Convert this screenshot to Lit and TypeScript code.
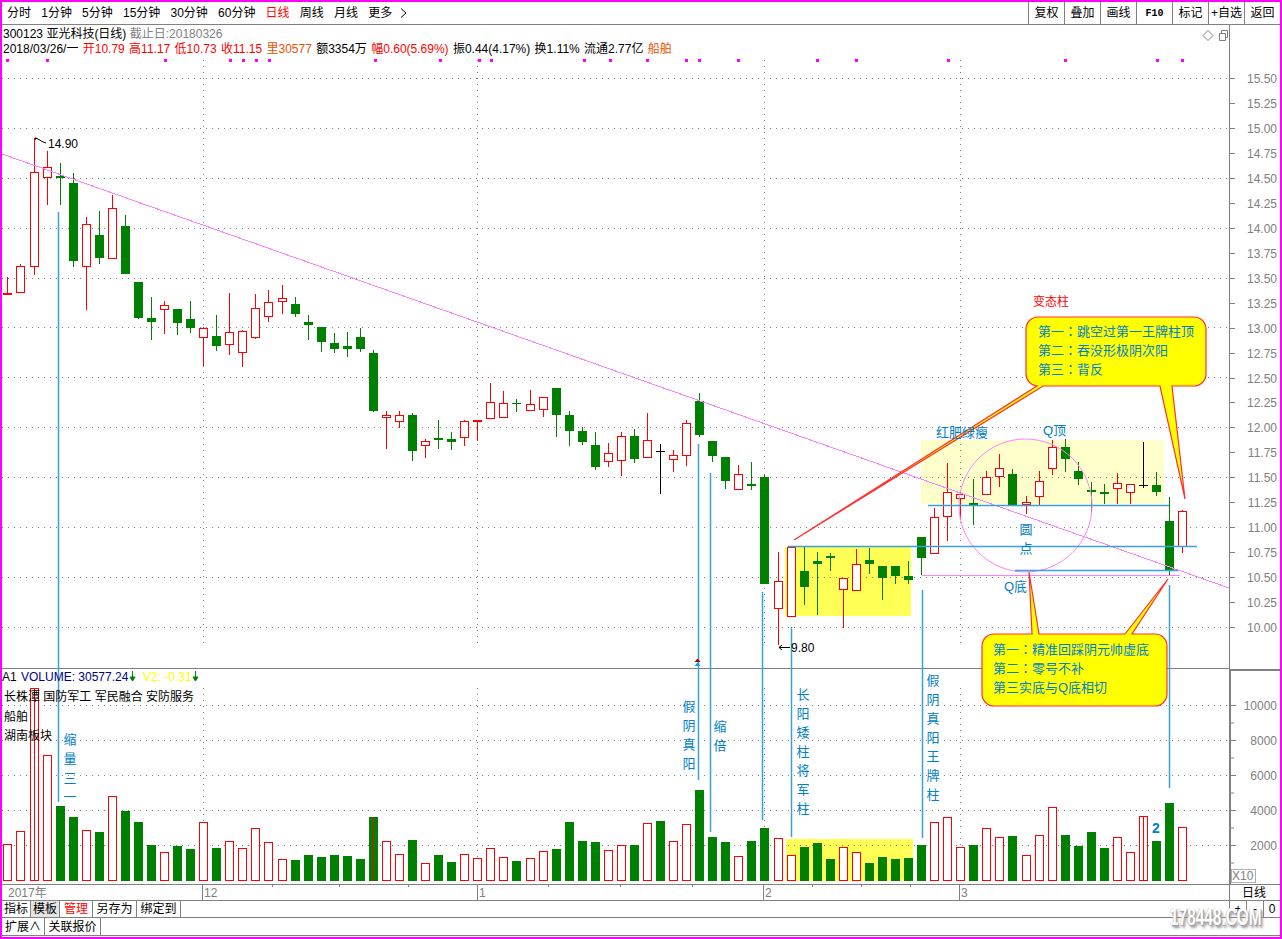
import { LitElement, html, css, svg } from "lit";
import { customElement } from "lit/decorators.js";

// type, wick top, body top, body bottom, wick bottom (pixel rows of the picture)
const CANDLES: [string, number, number, number, number][] = [
  ["r",277,293,295,295],["r",264,266,293,293],["r",138,172,267,275],["r",151,167,178,205],["g",163,176,178,205],
  ["g",173,183,261,267],["r",217,224,267,310],["g",211,235,258,264],["r",195,208,259,259],["g",215,226,274,274],
  ["g",282,282,318,319],["g",297,318,322,340],["r",301,305,310,334],["g",309,309,323,335],["g",301,319,328,333],
  ["r",327,328,338,366],["g",315,336,346,351],["r",293,332,345,355],["r",330,331,353,367],["r",294,308,338,339],
  ["r",290,302,317,322],["r",285,298,302,314],["g",297,304,314,317],["g",315,322,325,340],["g",327,327,342,352],
  ["g",333,343,349,353],["g",332,346,349,357],["g",328,337,349,352],["g",350,353,411,412],["r",411,415,418,449],
  ["r",411,415,422,428],["g",413,415,451,461],["r",439,441,446,458],["g",420,438,440,449],["g",432,439,442,450],
  ["r",420,421,438,446],["r",420,420,422,441],["r",383,402,419,419],["r",391,403,418,418],["g",399,403,404,412],
  ["r",390,404,411,411],["r",397,397,410,417],["g",388,388,415,437],["g",411,415,431,446],["g",427,431,442,445],
  ["g",432,445,467,470],["r",443,453,462,467],["r",432,436,461,476],["g",429,436,459,463],["r",413,440,458,458],
  ["k",444,451,451,494],["r",450,455,460,472],["r",420,423,456,466],["g",393,401,435,437],["g",441,441,456,462],
  ["g",457,457,481,489],["r",465,474,490,490],["g",462,484,486,490],["g",475,477,584,584],["r",552,581,609,645],
  ["r",547,547,617,617],["g",547,571,587,605],["g",552,561,564,615],["g",553,556,558,571],["r",578,578,590,628],
  ["r",549,564,591,591],["g",548,560,564,574],["g",566,566,578,600],["g",566,566,576,584],["g",561,576,580,584],
  ["g",537,537,558,575],["r",508,517,554,554],["r",463,492,517,541],["r",491,494,499,519],["g",479,503,505,525],
  ["r",471,477,495,495],["r",454,468,477,487],["g",469,474,505,505],["r",496,502,505,514],["r",471,481,497,505],
  ["r",440,447,469,475],["g",439,447,459,472],["g",462,471,479,485],["g",482,490,492,512],["g",484,492,494,504],
  ["r",473,483,489,504],["r",484,484,493,504],["k",442,485,485,488],["g",472,485,492,496],["g",497,521,570,575],
  ["r",510,511,547,553],
];

// volume bar: type and top row, in units of the 3x crop rows (row = v/3 + 665)
const VOLS: [string, number][] = [
  ["r",538],["r",499],["r",70],["r",271],["g",423],["g",456],["r",496],["g",501],["r",394],["g",438],
  ["g",471],["g",540],["r",562],["g",543],["g",552],["r",472],["g",549],["r",529],["r",550],["r",490],
  ["r",532],["r",583],["g",585],["g",570],["g",576],["g",570],["g",573],["g",582],["g",456],["r",529],
  ["r",568],["g",525],["r",595],["g",570],["g",591],["r",568],["r",580],["r",550],["r",577],["g",588],
  ["r",580],["r",559],["g",552],["g",471],["g",528],["g",531],["r",556],["r",541],["g",540],["r",475],
  ["g",468],["r",529],["r",478],["g",375],["g",516],["g",531],["r",574],["g",528],["g",489],["r",520],
  ["r",571],["g",546],["g",534],["g",582],["r",546],["r",562],["g",594],["g",576],["g",582],["g",579],
  ["g",540],["r",472],["r",457],["r",547],["g",540],["r",490],["r",517],["g",513],["r",571],["r",511],
  ["r",427],["g",510],["g",543],["g",501],["g",549],["r",517],["r",562],["r",454],["g",528],["g",414],
  ["r",487],
];

const colX = (i: number) => {
  let jumps = 0;
  for (const j of [2, 21, 40, 59, 78]) if (i >= j) jumps++;
  return 7 + 13 * i + jumps;
};

const VOL_BASE = 881;
const PRICE_Y = (p: number) => Math.round(627 - (p - 10) * 99.8);
const PRICE_LABELS: string[] = [];
for (let p = 10; p <= 15.5; p += 0.25) PRICE_LABELS.push(p.toFixed(2));
const DOT_XS = [7, 47, 165, 230, 243, 256, 269, 375, 440, 479, 491, 584, 610, 647, 686, 699, 738, 817, 856, 948, 1065, 1157, 1182];

const BLUE_V: [number, number, number][] = [
  [58, 212, 802], [698, 444, 780], [710, 473, 832], [762, 592, 820],
  [791, 627, 837], [922, 590, 838], [1169, 585, 788],
];
const BLUE_H: [number, number, number][] = [
  [546, 788, 1197], [505, 928, 1169], [570, 1015, 1178],
];

const VTEXT: [number, string, number[]][] = [
  [70, "缩量三一", [739, 758, 778, 796]],
  [689, "假阴真阳", [706, 725, 744, 763]],
  [720, "缩倍", [726, 745]],
  [803, "长阳矮柱将军柱", [694, 713, 732, 751, 770, 789, 808]],
  [933, "假阴真阳王牌柱", [680, 699, 718, 737, 756, 775, 794]],
  [1026, "圆点", [529, 548]],
];

const CALLOUT_LINES: [number, number, string, string][] = [
  [1038, 336, "第一", "跳空过第一王牌柱顶"],
  [1038, 355, "第二", "吞没形极阴次阳"],
  [1038, 374, "第三", "背反"],
  [993, 654, "第一", "精准回踩阴元帅虚底"],
  [993, 673, "第二", "零号不补"],
];

@customElement("app-root")
export class AppRoot extends LitElement {
  static styles = css`
    :host {
      display: block;
      width: 1282px;
      height: 939px;
      box-sizing: border-box;
      border: 2px solid #ff00ff;
      background: #fff;
      color: #000;
      font: 12px/15px "Liberation Sans", "Noto Sans CJK SC", sans-serif;
      overflow: hidden;
    }
    .page { display: flex; flex-direction: column; height: 100%; }
    .toolbar {
      flex: none; height: 22px; display: flex; align-items: center;
      border-bottom: 1px solid #808080; padding-left: 5px;
    }
    .periods { display: flex; gap: 10.2px; padding-top: 1px; }
    .periods .on { color: #f00; }
    .chev { display: block; margin-left: -1px; }
    .actions { margin-left: auto; display: flex; height: 100%; }
    .actions span {
      width: 36px; box-sizing: border-box; border-left: 1px solid #808080; padding-top: 1px;
      display: flex; align-items: center; justify-content: center;
    }
    .actions .mono { font: bold 10px "Liberation Mono", monospace; }
    .chart { position: relative; flex: none; height: 875px; }
    .chart svg.canvas { display: block; }
    .info { position: absolute; left: 1px; top: 1px; white-space: pre; padding-top: 1px; }
    .info .wide { word-spacing: 1px; }
    .sectors { position: absolute; left: 2px; top: 663px; line-height: 19.5px; }
    .gray { color: #808080; }
    .red { color: #f00; }
    .orange { color: #e85000; }
    svg text { font: 12px "Liberation Sans", "Noto Sans CJK SC", sans-serif; }
    svg text.axis { fill: #808080; }
    svg text.end { text-anchor: end; }
    svg text.note { fill: #0080c8; font-size: 13px; }
    svg text.mid { text-anchor: middle; }
    svg text.bold { font-weight: bold; font-size: 14px; }
    svg text.alert { fill: #f00; }
    svg text.navy { fill: #000080; }
    svg text.yellow { fill: #ffff00; }
    svg tspan.colon { font-family: "Noto Sans CJK TC", sans-serif; }
    .rows { position: relative; flex: none; }
    .row {
      display: flex; border-top: 1px solid #808080; box-sizing: border-box;
    }
    .row.one { height: 17px; }
    .row.two { border-bottom: 1px solid #808080; height: 19px; }
    .tab {
      box-sizing: border-box; padding-top: 1px; display: flex; align-items: center; justify-content: center;
      border-right: 1px solid #808080;
    }
    .tab.w29 { width: 29px; }
    .tab.w33 { width: 33px; }
    .tab.w44 { width: 44px; }
    .tab.w43 { width: 43px; }
    .tab.w56 { width: 56px; }
    .tab.sel { background: #e4e4e4; }
    .tab.red { color: #f00; }
    .spin { margin-left: auto; display: flex; }
    .spin span {
      width: 17px; box-sizing: border-box; border-left: 1px solid #808080;
      display: flex; align-items: center; justify-content: center;
    }
    .watermark {
      position: absolute; left: 1168px; top: 2px; color: #fff;
      font: bold 23px/30px "Liberation Sans", sans-serif;
      transform: scaleX(0.67);
      transform-origin: left center;
      text-shadow: 1px 1px 1px #999, 3px 3px 3px #999, -1px 0 0 #d0d0d0;
    }
  `;

  private chartSvg() {
    const grid = [128, 178, 228, 278, 327, 377, 427, 477, 527, 577, 627, 78].map(
      (y) => svg`<line x1="2" x2="1229" y1=${y + 0.5} y2=${y + 0.5} class="" stroke="#808080" stroke-dasharray="1 5" />`
    );
    const vgrid = [705, 740, 775, 810, 845].map(
      (y) => svg`<line x1="2" x2="1229" y1=${y + 0.5} y2=${y + 0.5} stroke="#808080" stroke-dasharray="1 5" />`
    );
    const vcols = [203, 477, 764, 960].map(
      (x) => svg`
        <line x1=${x + 0.5} x2=${x + 0.5} y1="60" y2="648" stroke="#808080" stroke-dasharray="1 5" />
        <line x1=${x + 0.5} x2=${x + 0.5} y1="688" y2="881" stroke="#808080" stroke-dasharray="1 5" />`
    );
    const candles = CANDLES.map(([t, wt, bt, bb, wb], i) => {
      const x = colX(i);
      const c = t === "r" ? "#ff0000" : t === "g" ? "#008000" : "#000000";
      const flat = bb - bt <= 1;
      if (t === "k") {
        return svg`<g stroke=${c}>
          <line x1=${x + 0.5} x2=${x + 0.5} y1=${wt} y2=${wb} />
          <line x1=${x - 4} x2=${x + 5} y1=${bt + 0.5} y2=${bt + 0.5} /></g>`;
      }
      const fill = t === "r" ? "#fff" : c;
      return svg`<g stroke=${c}>
        <line x1=${x + 0.5} x2=${x + 0.5} y1=${wt} y2=${wb} />
        ${
          flat
            ? svg`<line x1=${x - 4} x2=${x + 5} y1=${bt + 0.5} y2=${bt + 0.5} />`
            : svg`<rect x=${x - 3.5} y=${bt + 0.5} width="8" height=${bb - bt - 1} fill=${fill} />`
        }</g>`;
    });
    const vols = VOLS.map(([t, v], i) => {
      const x = colX(i);
      const top = Math.round(v / 3 + 665);
      if (t === "g") {
        return svg`<rect x=${x - 4} y=${top} width="9" height=${VOL_BASE - top} fill="#008000" />
          ${i === 28 ? svg`<line x1=${x + 0.5} x2=${x + 0.5} y1=${top} y2=${VOL_BASE} stroke="#f00" />` : ""}`;
      }
      return svg`<rect x=${x - 3.5} y=${top + 0.5} width="8" height=${VOL_BASE - top - 1} fill="#fff" stroke="#f00" />
        ${i === 2 || i === 87 ? svg`<line x1=${x + 0.5} x2=${x + 0.5} y1=${top} y2=${VOL_BASE} stroke="#f00" />` : ""}`;
    });
    const priceAxis = PRICE_LABELS.map((p) => {
      const y = PRICE_Y(Number(p));
      return svg`<line x1="1230" x2="1235" y1=${y + 0.5} y2=${y + 0.5} stroke="#808080" />
        <text class="axis end" x="1277" y=${y + 4.5}>${p}</text>`;
    });
    const volAxis = [[705, "10000"], [740, "8000"], [775, "6000"], [810, "4000"], [845, "2000"]].map(
      ([y, t]) => svg`
        <line x1="1231" x2="1236" y1=${Number(y) + 0.5} y2=${Number(y) + 0.5} stroke="#808080" />
        <line x1="1231" x2="1234" y1=${Number(y) + 18} y2=${Number(y) + 18} stroke="#808080" />
        <text class="axis end" x="1277" y=${Number(y) + 4.5}>${t}</text>`
    );
    const dateTicks = [272, 339, 408, 548, 620, 692, 812, 861, 910].map(
      (x) => svg`<line x1=${x + 0.5} x2=${x + 0.5} y1="884" y2="887" stroke="#808080" />`
    );
    const dateSeps = [[202, "12"], [477, "1"], [763, "2"], [959, "3"]].map(
      ([x, t]) => svg`
        <line x1=${Number(x) + 0.5} x2=${Number(x) + 0.5} y1="884" y2="900" stroke="#808080" />
        <text class="axis" x=${Number(x) + 2} y="897">${t}</text>`
    );
    const notes = VTEXT.flatMap(([x, s, ys]) =>
      [...s].map((ch, i) => svg`<text class="note mid" x=${x} y=${ys[i] + 5}>${ch}</text>`)
    );
    return svg`
      <!-- highlights -->
      <rect x="921" y="440" width="243" height="64" fill="#ffffcc" />
      <rect x="785" y="547" width="126" height="69" fill="#ffff55" />
      <rect x="786" y="839" width="127" height="42" fill="#ffff55" />

      ${grid}${vgrid}${vcols}
      <g shape-rendering="crispEdges">${vols}${candles}</g>
      ${DOT_XS.map((x) => svg`<rect x=${x - 1} y="59" width="3" height="3" fill="#ff00ff" />`)}

      <!-- frames -->
      <line x1="2" x2="1229" y1="668.5" y2="668.5" stroke="#808080" />
      <line x1="1229.5" x2="1229.5" y1="25" y2="669" stroke="#808080" />
      <rect x="1229" y="669" width="52" height="2" fill="#808080" />
      <rect x="1229" y="669" width="2" height="215" fill="#808080" />
      ${priceAxis}${volAxis}
      <rect x="1231.5" y="869.5" width="24" height="13" fill="#fff" stroke="#b0b0b0" />
      <text class="axis" x="1232" y="880">X10</text>
      <line x1="2" x2="1280" y1="884.5" y2="884.5" stroke="#808080" />
      ${dateTicks}${dateSeps}
      <text class="axis" x="8" y="897">2017年</text>
      <text class="mid" x="1254" y="897">日线</text>
      <line x1="1229.5" x2="1229.5" y1="884" y2="900" stroke="#808080" />

      <!-- trend, circle and support lines -->
      <line x1="2" y1="154" x2="1229" y2="588" stroke="#ff80ff" shape-rendering="crispEdges" />
      <circle cx="1025.5" cy="505.5" r="66.5" fill="none" stroke="#ff80ff" />
      <line x1="922" x2="1180" y1="575.5" y2="575.5" stroke="#ff80ff" />
      ${BLUE_V.map(
        ([x, a, b]) => svg`<line x1=${x + 0.5} x2=${x + 0.5} y1=${a} y2=${b} stroke="#3ca0d8" stroke-width="1.5" />`
      )}
      ${BLUE_H.map(
        ([y, a, b]) => svg`<line x1=${a} x2=${b} y1=${y + 0.5} y2=${y + 0.5} stroke="#3ca0d8" stroke-width="1.5" />`
      )}

      <!-- price markers -->
      <g fill="none" stroke="#000">
        <path d="M36 137.5 L35 140 M35 138 L38 139 L42 141.5 L46 143" />
        <path d="M779 647.5 H790 M779 647.5 L782 645 M779 647.5 L782 650" />
      </g>
      <text x="48" y="148">14.90</text>
      <text x="791" y="652">9.80</text>
      <path d="M694.5 662 L697.5 658.5 L700.5 662 Z" fill="#b00000" />
      <path d="M694.5 666 L697.5 662.5 L700.5 666 Z" fill="#00a0ff" />

      <!-- callouts -->
      <path
        d="M1038 317 H1194 a12 12 0 0 1 12 12 V374 a12 12 0 0 1 -12 12 H1172 L1185 499 L1160 386 H1043 L794 540 L1037 386 a12 12 0 0 1 -11 -12 V329 a12 12 0 0 1 12 -12 Z"
        fill="#ffff00" stroke="#ff3030" stroke-width="1.2"
      />
      <path
        d="M994 634 H1032 L1029 572 L1039 634 H1125 L1168 579 L1132 634 H1155 a12 12 0 0 1 12 12 V694 a12 12 0 0 1 -12 12 H994 a12 12 0 0 1 -12 -12 V646 a12 12 0 0 1 12 -12 Z"
        fill="#ffff00" stroke="#ff3030" stroke-width="1.2"
      />
      ${CALLOUT_LINES.map(
        ([x, y, head, rest]) =>
          svg`<text class="note" x=${x} y=${y}>${head}<tspan class="colon">：</tspan>${rest}</text>`
      )}
      <text class="note" x="993" y="692">第三实底与Q底相切</text>
      <text class="alert" x="1033" y="306">变态柱</text>
      <text class="note" x="936" y="437">红肥绿瘦</text>
      <text class="note" x="1043" y="435">Q顶</text>
      <text class="note" x="1004" y="591">Q底</text>
      ${notes}
      <text class="note bold" x="1152" y="833">2</text>

      <!-- volume legend -->
      <text x="2" y="681">A1</text>
      <text class="navy" x="21" y="681">VOLUME: 30577.24</text>
      <path d="M132.5 671 V679 M130 677 L132.5 681 L135 677 Z" stroke="#008000" fill="#008000" />
      <text class="yellow" x="143" y="681">V2: -0.31</text>
      <path d="M195.5 671 V679 M193 677 L195.5 681 L198 677 Z" stroke="#008000" fill="#008000" />

      <!-- window icons -->
      <path d="M1208 30.5 L1213 35.5 L1208 40.5 L1203 35.5 Z" fill="none" stroke="#808080" />
      <path d="M1219.5 33.5 h6 v7 h-6 Z M1221.5 33.5 v-3 h6 v7 h-2" fill="none" stroke="#808080" />
    `;
  }

  render() {
    return html`
      <div class="page">
        <div class="toolbar">
          <div class="periods">
            <span>分时</span><span>1分钟</span><span>5分钟</span><span>15分钟</span><span>30分钟</span><span>60分钟</span>
            <span class="on">日线</span><span>周线</span><span>月线</span><span>更多</span>
          </div>
          <svg class="chev" width="20" height="12" viewBox="0 0 20 12" aria-hidden="true">
            <path d="M10 1.5 L15 6 L10 10.5" fill="none" stroke="#000" />
          </svg>
          <div class="actions">
            <span>复权</span><span>叠加</span><span>画线</span><span class="mono">F10</span><span>标记</span><span>+自选</span><span>返回</span>
          </div>
        </div>
        <div class="chart">
          <svg class="canvas" width="1278" height="875" viewBox="2 25 1278 875">${this.chartSvg()}</svg>
          <div class="info">300123 亚光科技(日线) <span class="gray">截止日:20180326</span>
<span class="wide">2018/03/26/一 <span class="red">开10.79</span> <span class="red">高11.17</span> <span class="red">低10.73</span> <span class="red">收11.15</span> <span class="orange">里30577</span> 额3354万 <span class="red">幅0.60(5.69%)</span> 振0.44(4.17%) 换1.11% 流通2.77亿 <span class="orange">船舶</span></span></div>
          <div class="sectors">
            <div>长株潭 国防军工 军民融合 安防服务</div>
            <div>船舶</div>
            <div>湖南板块</div>
          </div>
        </div>
        <div class="rows">
          <div class="row one">
            <span class="tab w29">指标</span><span class="tab w29 sel">模板</span><span class="tab w33 red">管理</span><span class="tab w44">另存为</span><span class="tab w44">绑定到</span>
            <div class="spin"><span>+</span><span>-</span><span>0</span></div>
          </div>
          <div class="row two">
            <span class="tab w43">扩展∧</span><span class="tab w56">关联报价</span>
          </div>
          <div class="watermark">178448.COM</div>
        </div>
      </div>
    `;
  }
}
